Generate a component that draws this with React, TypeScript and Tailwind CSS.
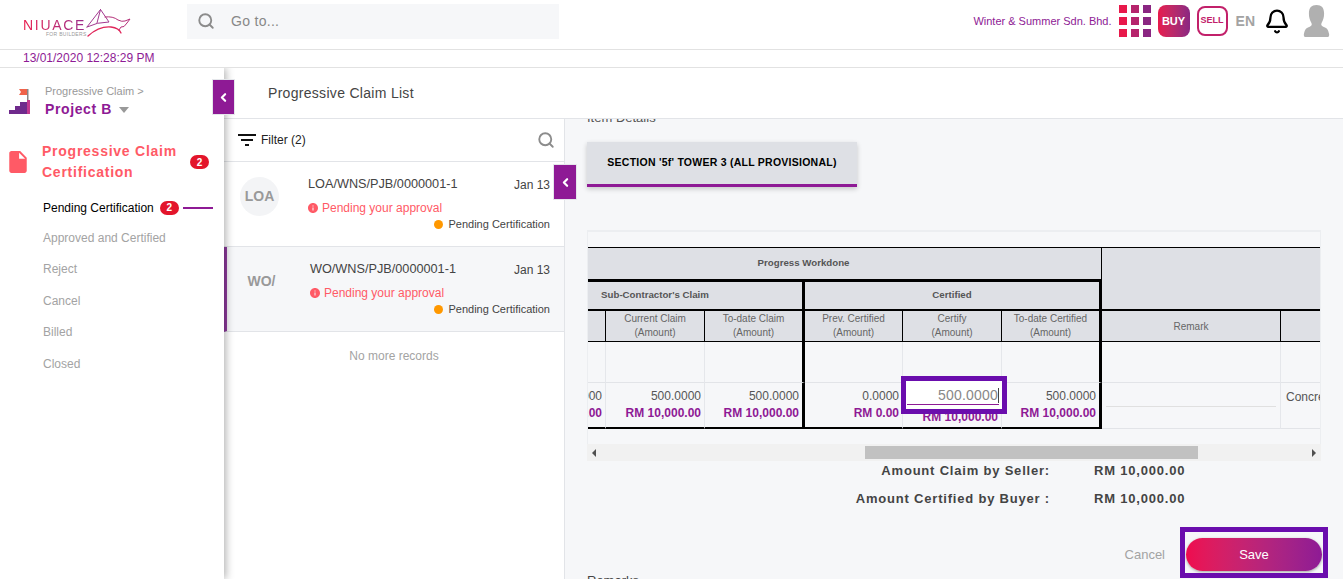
import React from 'react'
import { Bell, ChevronLeft, Search } from 'lucide-react'

const purple = 'text-[#8e1a95]'

function CollapseTab({ className }: { className: string }) {
  return (
    <button className={`absolute z-30 flex items-center justify-center bg-[#8e1a95] border border-[#e5e7eb] ${className}`}>
      <ChevronLeft className="w-[13px] h-[13px] text-white" strokeWidth={4} />
    </button>
  )
}

function Logo() {
  return (
    <div className="relative w-[120px] h-[34px] ml-[23px] shrink-0">
      <span className="absolute left-0 top-[9px] text-[14px] leading-[16px] tracking-[1.7px] font-normal bg-linear-to-r from-[#ea1a4c] to-[#9a2a8c] bg-clip-text text-transparent">
        NIUACE
      </span>
      <span className="absolute left-[23px] top-[23px] text-[5px] leading-[6px] tracking-[0.3px] text-[#999] whitespace-nowrap">
        FOR BUILDERS
      </span>
      <svg className="absolute left-[62px] top-0" width="50" height="32" viewBox="0 0 50 32" fill="none" strokeLinecap="round" strokeLinejoin="round">
        <path d="M2 19 L15.5 1.5 L24 14 Q12 14 2 19 M15.5 1.5 L12 15" stroke="#a33a90" strokeWidth="1" />
        <path d="M20 9 Q28 8 33 12 Q37 14 40 13 L45 11 L42 15 Q39 20 36 19 L34 22" stroke="#b5307a" strokeWidth="1" />
        <path d="M3 28 Q14 18 26 19 Q34 20 36 25" stroke="#e0265a" strokeWidth="1.3" />
      </svg>
    </div>
  )
}

function AppsGrid() {
  const colors = ['bg-[#e8194b]', 'bg-[#b6246c]', 'bg-[#8a2682]']
  return (
    <div className="grid grid-cols-3 gap-[4px] w-[32px]">
      {[0, 1, 2].map((r) =>
        colors.map((c, i) => <span key={`${r}-${i}`} className={`w-[8px] h-[8px] ${c}`} />)
      )}
    </div>
  )
}

function Avatar() {
  return (
    <svg width="27" height="32" viewBox="0 0 32 34" preserveAspectRatio="none" className="shrink-0">
      <path
        d="M16 0c6 0 9 3 9 9 0 4-1 7-3 10-1 2 0 3 2 4 4 1 6 3 7 8 0 1 0 2-1 3H2c-1-1-1-2-1-3 1-5 3-7 7-8 2-1 3-2 2-4-2-3-3-6-3-10 0-6 3-9 9-9z"
        fill="#b0b0b0"
      />
    </svg>
  )
}

function Header() {
  return (
    <header className="relative z-20 bg-white">
      <div className="h-[50px] flex items-center border-b border-[#e2e2e2]">
        <Logo />
        <div className="ml-[44px] w-[372px] h-[35px] bg-[#f6f7f9] flex items-center mb-[7px]">
          <Search className="ml-[10px] w-[18px] h-[18px] text-[#8c8c8c]" strokeWidth={2.5} />
          <span className="ml-[16px] text-[14px] tracking-[0.3px] text-[#888]">Go to...</span>
        </div>
        <div className="ml-auto mr-[13px] flex items-center mb-[7px]">
          <span className={`text-[11px] mr-[7px] ${purple}`}>Winter &amp; Summer Sdn. Bhd.</span>
          <AppsGrid />
          <div className="ml-[7px] w-[32px] h-[32px] rounded-lg bg-linear-to-r from-[#e8194b] to-[#8a2682] flex items-center justify-center text-white text-[11px] font-bold">
            BUY
          </div>
          <div className="ml-[7px] w-[31px] h-[30px] rounded-lg border-2 border-[#c2206a] flex items-center justify-center text-[9px] font-bold text-[#c2206a]">
            SELL
          </div>
          <span className="ml-[8px] text-[14px] font-bold text-[#a3a3a3]">EN</span>
          <Bell className="ml-[9px] w-[26px] h-[27px] text-black" strokeWidth={2.1} />
          <div className="ml-[13px]">
            <Avatar />
          </div>
        </div>
      </div>
      <div className="h-[18px] border-b border-[#e2e2e2] pl-[23px] flex items-center">
        <span className={`text-[12px] leading-[17px] ${purple}`}>13/01/2020 12:28:29 PM</span>
      </div>
    </header>
  )
}

function Badge({ value }: { value: number }) {
  return (
    <span className="w-[19px] h-[14px] rounded-full bg-[#e3152b] text-white text-[10px] font-bold flex items-center justify-center shrink-0">
      {value}
    </span>
  )
}

function Sidebar() {
  const items = ['Approved and Certified', 'Reject', 'Cancel', 'Billed', 'Closed']
  return (
    <aside className="relative z-10 w-[224px] shrink-0 bg-white shadow-[2px_0_8px_rgba(0,0,0,0.3)]">
      <div className="flex pl-[9px] pt-[16px] h-[71px]">
        <svg width="22" height="26" viewBox="0 0 22 26" className="mt-[4px] shrink-0">
          <path d="M10 1h8v6h-8l2-3z" fill="#f0634a" />
          <rect x="18" y="1" width="1.5" height="12" fill="#888" />
          <path d="M0 26v-4h6v-4h5v-4h7v12z" fill="#6f2a8c" />
          <rect x="18" y="12" width="3" height="14" fill="#c2388f" />
        </svg>
        <div className="ml-[14px]">
          <div className="text-[11px] leading-[14px] text-[#999]">Progressive Claim &gt;</div>
          <div className="flex items-center mt-[2px]">
            <span className={`text-[14px] leading-[18px] font-bold tracking-[0.6px] ${purple}`}>Project B</span>
            <span className="ml-[7px] mt-[2px] border-x-[5px] border-x-transparent border-t-[6px] border-t-[#999]" />
          </div>
        </div>
      </div>
      <div className="flex items-center pl-[7px] pr-[15px] h-[42px] mt-[2px]">
        <svg width="22" height="24" viewBox="2 1 20 22" fill="#ff5a66" className="shrink-0">
          <path d="M14 2H6c-1.1 0-2 .9-2 2v16c0 1.1.9 2 2 2h12c1.1 0 2-.9 2-2V8l-6-6zm-1 7V3.5L18.5 9H13z" />
        </svg>
        <span className="ml-[13px] w-[148px] text-[14px] leading-[21px] font-bold tracking-[0.75px] text-[#ff5a66]">
          Progressive Claim Certification
        </span>
        <Badge value={2} />
      </div>
      <div className="pl-[43px] mt-[17px]">
        <div className="flex items-center h-[15px]">
          <span className="text-[12px] text-black whitespace-nowrap">Pending Certification</span>
          <span className="ml-[6px]">
            <Badge value={2} />
          </span>
          <span className="ml-[4px] w-[30px] h-[2px] bg-[#8e1a95]" />
        </div>
        <div className="flex flex-col gap-[16.4px] mt-[16px]">
          {items.map((t) => (
            <span key={t} className="text-[12px] leading-[15px] text-[#a3a3a3]">
              {t}
            </span>
          ))}
        </div>
      </div>
    </aside>
  )
}

function InfoIcon() {
  return (
    <svg width="10" height="10" viewBox="2 2 20 20" fill="#ff5a66" className="shrink-0">
      <path d="M12 2C6.48 2 2 6.48 2 12s4.48 10 10 10 10-4.48 10-10S17.52 2 12 2zm1 15h-2v-6h2v6zm0-8h-2V7h2v2z" />
    </svg>
  )
}

function ClaimRow({ code, title, active }: { code: string; title: string; active?: boolean }) {
  return (
    <div className={`relative h-[85px] border-b border-[#e2e4e8] flex ${active ? 'bg-[#f6f7f9] border-l-[3px] border-l-[#8e3a9d] pl-[15px]' : 'pl-[16px]'}`}>
      <div className={`mt-[15px] w-[39px] h-[39px] rounded-full flex items-center justify-center text-[14px] font-bold text-[#999] shrink-0 ${active ? '' : 'bg-[#f3f4f6]'}`}>
        {code}
      </div>
      <div className="flex-1 pr-[14px] pt-[14px] pl-[29px]">
        <div className="flex items-start justify-between">
          <span className="text-[12.7px] leading-[16px] text-[#444]">{title}</span>
          <span className="text-[12px] leading-[15px] text-[#444] mt-[2px]">Jan 13</span>
        </div>
        <div className="flex items-center gap-[4px] mt-[7px]">
          <InfoIcon />
          <span className="text-[12px] leading-[16px] text-[#ff5a66]">Pending your approval</span>
        </div>
        <div className="flex items-center justify-end gap-[5px] mt-[1px]">
          <span className="w-[9px] h-[9px] rounded-full bg-[#ff9800]" />
          <span className="text-[11px] leading-[15px] text-[#444]">Pending Certification</span>
        </div>
      </div>
    </div>
  )
}

function ClaimList() {
  return (
    <div className="relative w-[341px] shrink-0 bg-white border-r border-[#e2e4e8]">
      <div className="h-[43px] border-b border-[#e2e4e8] flex items-center pl-[14px] pr-[9px]">
        <svg width="18" height="18" viewBox="3 6 18 12" fill="#111" className="shrink-0">
          <path d="M3 6h18v2H3zm3 5h12v2H6zm4 5h4v2h-4z" />
        </svg>
        <span className="ml-[5px] text-[12px] text-[#222]">Filter (2)</span>
        <Search className="ml-auto w-[18px] h-[18px] text-[#8c8c8c]" strokeWidth={2.5} />
      </div>
      <ClaimRow code="LOA" title="LOA/WNS/PJB/0000001-1" />
      <ClaimRow code="WO/" title="WO/WNS/PJB/0000001-1" active />
      <div className="text-center text-[12px] text-[#a3a3a3] pt-[15px]">No more records</div>
    </div>
  )
}

function HeadCell({ title, thick }: { title: string; thick?: boolean }) {
  return (
    <div className={`bg-[#dee0e5] border-b border-b-black border-r-black flex flex-col items-center justify-center text-[10px] leading-[14px] text-[#666] ${thick ? 'border-r-[3px]' : 'border-r'}`}>
      <span className="whitespace-nowrap">{title}</span>
      <span>(Amount)</span>
    </div>
  )
}

function AmountCell({ value, amount, className = '' }: { value: string; amount: string; className?: string }) {
  return (
    <div className={`border-b-[2px] border-b-black flex flex-col items-end justify-center pr-[3px] pb-[1px] overflow-hidden whitespace-nowrap text-[12px] leading-[17px] ${className}`}>
      <span className="text-[#555]">{value}</span>
      <span className={`font-bold ${purple}`}>{amount}</span>
    </div>
  )
}

function ItemTable() {
  const blank = 'border-b border-b-[#e2e4e8] border-r border-r-[#e5e7eb]'
  const thickBlank = 'border-b border-b-[#e2e4e8] border-r-[3px] border-r-black'
  const light = 'border-r border-r-[#e5e7eb]'
  return (
    <div className="relative h-[214px] border-t-2 border-x border-[#eceef1] pt-[15px] overflow-hidden">
      <div className="grid grid-cols-[18px_99px_100px_98px_99px_100px_179px_40px] grid-rows-[32px_32px_31px_41px_46px] w-[733px]">
        {/* group headers are centred on columns scrolled off to the left */}
        <div className="col-span-6 bg-[#dee0e5] border-t border-t-black border-r border-r-black flex items-center justify-center pr-[82px] text-[9.7px] font-bold text-[#555]">
          Progress Workdone
        </div>
        <div className="col-span-2 bg-[#dee0e5] border-t border-t-black" />

        <div className="col-span-3 bg-[#dee0e5] border-t-[3px] border-t-black border-b-2 border-b-black border-r-[3px] border-r-black flex items-center justify-center pr-[80px] text-[9.7px] font-bold text-[#555]">
          Sub-Contractor's Claim
        </div>
        <div className="col-span-3 bg-[#dee0e5] border-t-[3px] border-t-black border-b-2 border-b-black border-r-[3px] border-r-black flex items-center justify-center text-[9.7px] font-bold text-[#555]">
          Certified
        </div>
        <div className="col-span-2 bg-[#dee0e5] border-b-2 border-b-black" />

        <div className="bg-[#dee0e5] border-b border-b-black border-r border-r-black" />
        <HeadCell title="Current Claim" />
        <HeadCell title="To-date Claim" thick />
        <HeadCell title="Prev. Certified" />
        <HeadCell title="Certify" />
        <HeadCell title="To-date Certified" thick />
        <div className="bg-[#dee0e5] border-b border-b-black border-r border-r-black flex items-center justify-center text-[10px] text-[#666]">
          Remark
        </div>
        <div className="bg-[#dee0e5] border-b border-b-black" />

        <div className={blank} />
        <div className={blank} />
        <div className={thickBlank} />
        <div className={blank} />
        <div className={blank} />
        <div className={thickBlank} />
        <div className={blank} />
        <div className="border-b border-b-[#e2e4e8]" />

        <AmountCell value="500.0000" amount="RM 10,000.00" className={light} />
        <AmountCell value="500.0000" amount="RM 10,000.00" className={light} />
        <AmountCell value="500.0000" amount="RM 10,000.00" className="border-r-[3px] border-r-black" />
        <AmountCell value="0.0000" amount="RM 0.00" className={light} />
        <AmountCell value="" amount="RM 10,000.00" className={`justify-end ${light}`} />
        <AmountCell value="500.0000" amount="RM 10,000.00" className="border-r-[3px] border-r-black" />
        <div className="border-b border-b-[#e2e4e8] border-r border-r-[#e5e7eb] px-[4px]">
          <div className="h-[24px] border-b border-[#e0e0e0]" />
        </div>
        <div className="border-b border-b-[#e2e4e8] pl-[5px] pt-[5px] text-[12px] text-[#555] overflow-hidden whitespace-nowrap">
          Concrete
        </div>
      </div>

      {/* highlighted certify input */}
      <div className="absolute left-[313px] top-[144px] w-[106px] h-[38px] border-[5px] border-[#6a0dad] bg-white pl-[1px] pr-[3px]">
        <div className="h-[24px] border-b border-[#8e1a95] flex items-center justify-end pt-[5px] text-[14px] tracking-[0.2px] text-[#888]">
          <span className="border-r border-[#444] leading-[15px]">500.0000</span>
        </div>
      </div>
    </div>
  )
}

function HScrollbar() {
  return (
    <div className="relative h-[17px] bg-[#f1f1f1] flex items-center justify-between px-[5px]">
      <span className="border-y-[4px] border-y-transparent border-r-[4px] border-r-[#505050]" />
      <span className="absolute left-[278px] w-[333px] top-[2px] h-[13px] bg-[#c1c1c1]" />
      <span className="border-y-[4px] border-y-transparent border-l-[4px] border-l-[#505050]" />
    </div>
  )
}

function Detail() {
  return (
    <div className="flex-1 min-w-0 overflow-hidden bg-[#f6f7f9] pl-[22px] pr-[22px]">
      <div className="text-[13px] leading-[16px] text-[#555] -mt-[9px]">Item Details</div>
      <div className="mt-[16px] w-[270px] h-[45px] bg-[#dee0e5] border-b-[3px] border-[#8e1a95] shadow-[0_2px_5px_rgba(0,0,0,0.2)] flex items-center justify-center text-[10.5px] font-bold tracking-[0.25px] text-black">
        SECTION '5f' TOWER 3 (ALL PROVISIONAL)
      </div>
      <div className="mt-[43px]">
        <ItemTable />
        <HScrollbar />
      </div>
      <div className="flex flex-col gap-[10px] mt-px text-[13px] leading-[18px] font-bold tracking-[0.8px] text-[#444]">
        <div className="flex">
          <span className="w-[463px] text-right">Amount Claim by Seller:</span>
          <span className="ml-[44px]">RM 10,000.00</span>
        </div>
        <div className="flex">
          <span className="w-[463px] text-right">Amount Certified by Buyer :</span>
          <span className="ml-[44px]">RM 10,000.00</span>
        </div>
      </div>
      <div className="mt-[30px] flex items-center justify-end -mr-px">
        <span className="text-[13px] text-[#a3a3a3] mr-[21px]">Cancel</span>
        <button className="relative w-[136px] h-[33px] rounded-full bg-linear-to-r from-[#ef0a4e] to-[#8e1a95] shadow-[0_1px_3px_rgba(0,0,0,0.35)] text-white text-[13px]">
          Save
          <span className="absolute -left-[6px] -right-[6px] -top-[11px] -bottom-[7px] border-[5px] border-[#6a0dad]" />
        </button>
      </div>
      <div className="text-[13px] leading-[16px] text-[#444] mt-[2px]">Remarks</div>
    </div>
  )
}

export default function App() {
  return (
    <div className="relative h-screen overflow-hidden bg-white font-['Liberation_Sans',Arial,sans-serif] flex flex-col">
      <Header />
      <div className="flex-1 min-h-0 flex">
        <Sidebar />
        <main className="flex-1 min-w-0 flex flex-col">
          <div className="h-[51px] bg-white border-b border-[#e2e4e8] flex items-center pl-[44px] text-[14px] tracking-[0.3px] text-[#444] shrink-0">
            Progressive Claim List
          </div>
          <div className="flex-1 min-h-0 flex">
            <ClaimList />
            <Detail />
          </div>
        </main>
      </div>
      <CollapseTab className="left-[212px] top-[79px] w-[23px] h-[36px]" />
      <CollapseTab className="left-[553px] top-[164px] w-[24px] h-[36px]" />
    </div>
  )
}
